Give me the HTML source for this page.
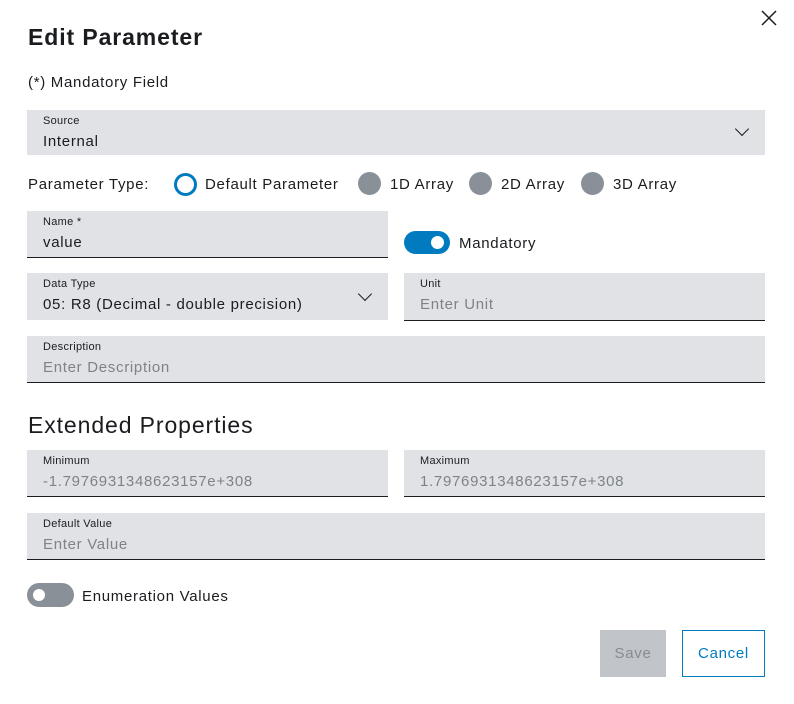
<!DOCTYPE html>
<html><head><style>
body{margin:0;width:794px;height:704px;background:#fff;font-family:"Liberation Sans",sans-serif;color:#1a1c1f;position:relative;overflow:hidden;letter-spacing:0.7px}
.a{position:absolute}
.f{position:absolute;background:#e0e2e5;box-sizing:border-box}
.f.u{border-bottom:1.5px solid #1a1c1f}
.f .l{position:absolute;left:16px;top:5px;font-size:11px;letter-spacing:0.3px}
.f .v{position:absolute;left:16px;top:23px;font-size:15px}
.f .p{color:#7d8389}
.chev{position:absolute;width:9px;height:9px;border-right:1.6px solid #1a1c1f;border-bottom:1.6px solid #1a1c1f;transform:rotate(45deg)}
.rad{position:absolute;width:23px;height:23px;border-radius:50%;background:#8a9097}
.t{position:absolute;font-size:15px}
</style></head><body>
<div class="a" style="left:28px;top:24px;font-size:23px;font-weight:bold;letter-spacing:0.9px">Edit Parameter</div>
<svg class="a" style="left:761px;top:10px" width="16" height="16"><path d="M1 1L15 15M15 1L1 15" stroke="#1a1c1f" stroke-width="1.5"/></svg>
<div class="t" style="left:28px;top:74px">(*) Mandatory Field</div>

<div class="f" style="left:27px;top:110px;width:738px;height:45px"><div class="l">Source</div><div class="v">Internal</div><div class="chev" style="right:18px;top:14px"></div></div>

<div class="t" style="left:28px;top:176px">Parameter Type:</div>
<div class="a" style="left:174px;top:173px;width:17px;height:17px;border:3.5px solid #007bc0;border-radius:50%"></div>
<div class="t" style="left:205px;top:176px">Default Parameter</div>
<div class="rad" style="left:358px;top:172px"></div><div class="t" style="left:390px;top:176px">1D Array</div>
<div class="rad" style="left:469px;top:172px"></div><div class="t" style="left:501px;top:176px">2D Array</div>
<div class="rad" style="left:581px;top:172px"></div><div class="t" style="left:613px;top:176px">3D Array</div>

<div class="f u" style="left:27px;top:211px;width:361px;height:47px"><div class="l">Name *</div><div class="v">value</div></div>
<div class="a" style="left:404px;top:231px;width:46px;height:23px;border-radius:12px;background:#007bc0"></div>
<div class="a" style="left:431px;top:236px;width:13px;height:13px;border-radius:50%;background:#fff"></div>
<div class="t" style="left:459px;top:235px">Mandatory</div>

<div class="f" style="left:27px;top:273px;width:361px;height:47px"><div class="l">Data Type</div><div class="v">05: R8 (Decimal - double precision)</div><div class="chev" style="right:18px;top:16px"></div></div>
<div class="f u" style="left:404px;top:273px;width:361px;height:48px"><div class="l">Unit</div><div class="v p">Enter Unit</div></div>

<div class="f u" style="left:27px;top:336px;width:738px;height:47px"><div class="l">Description</div><div class="v p">Enter Description</div></div>

<div class="a" style="left:28px;top:412px;font-size:23px;letter-spacing:0.9px">Extended Properties</div>

<div class="f u" style="left:27px;top:450px;width:361px;height:47px"><div class="l">Minimum</div><div class="v p">-1.7976931348623157e+308</div></div>
<div class="f u" style="left:404px;top:450px;width:361px;height:47px"><div class="l">Maximum</div><div class="v p">1.7976931348623157e+308</div></div>
<div class="f u" style="left:27px;top:513px;width:738px;height:47px"><div class="l">Default Value</div><div class="v p">Enter Value</div></div>

<div class="a" style="left:27px;top:583px;width:47px;height:24px;border-radius:12px;background:#8a9097"></div>
<div class="a" style="left:33px;top:589px;width:12px;height:12px;border-radius:50%;background:#fff"></div>
<div class="t" style="left:82px;top:588px">Enumeration Values</div>

<div class="a" style="left:600px;top:630px;width:66px;height:47px;background:#c1c5ca;color:#878c92;font-size:15px;line-height:48px;text-align:center">Save</div>
<div class="a" style="left:682px;top:630px;width:83px;height:47px;box-sizing:border-box;border:1.5px solid #007bc0;color:#007bc0;font-size:15px;line-height:46px;text-align:center">Cancel</div>
</body></html>
